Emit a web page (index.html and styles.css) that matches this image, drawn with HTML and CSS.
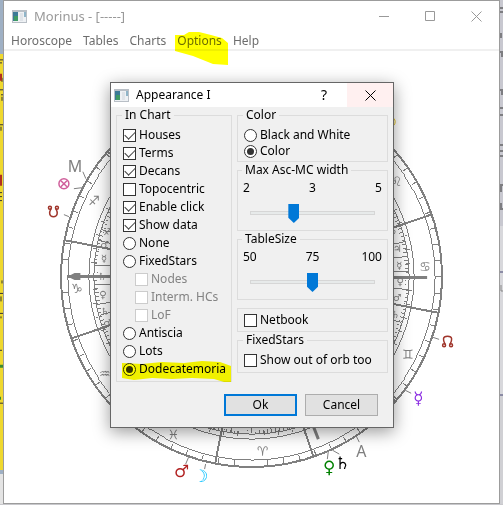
FILE: index.html
```html
<!DOCTYPE html>
<html lang="en">
<head>
    <meta charset="UTF-8">
    <meta name="viewport" content="width=device-width, initial-scale=1.0">
    <title>Morinus</title>
    <link rel="stylesheet" href="styles.css">
</head>
<body>
    <svg class="symbols" aria-hidden="true">
        <symbol id="app-icon" viewBox="0 0 15 13">
            <path fill="#b9bfc6" d="M0 0h15v13H0z"/>
            <path fill="#eef1f4" d="M1 2h13v10H1z"/>
            <path fill="#3c7a96" d="M1 2h5v9H1z"/>
            <path fill="#3f9a63" d="M2 6h4v5H2z"/>
            <path fill="#dfe3e8" d="M8 3h3v8H8z"/>
            <path fill="#8fb4c8" d="M12 2h2v5h-2z"/>
        </symbol>
        <symbol id="close-icon" viewBox="0 0 11 11">
            <path fill="none" stroke="currentColor" d="M.5.5l10 10M10.5.5l-10 10"/>
        </symbol>
    </svg>

    <!-- edges of the windows behind -->
    <svg class="behind left" viewBox="0 0 4 505" preserveAspectRatio="xMinYMin slice" aria-hidden="true">
        <path stroke="#333" d="M0 60h3M0 63h2M2 78v4M0 90h4M1 95h3M2 97v4M0 125h3M1 127v4M0 193h2M0 197h2M0 201h2M2 281v3M0 294h3M1 297v5M0 314h3M1 317v2M0 351h2M0 404h3"/>
        <path stroke="#b03020" stroke-width="2" d="M1 74v7M1 175v11"/>
        <path stroke="#3c8a30" stroke-width="3" d="M0 367h4M0 399h1"/>
    </svg>

    <main class="window">
        <header class="titlebar">
            <svg class="app-icon"><use href="#app-icon"/></svg>
            <h1 class="title">Morinus - [-----]</h1>
            <button class="caption-btn" aria-label="Minimize">
                <svg width="11" height="11"><path stroke="currentColor" d="M0 5.5h10"/></svg>
            </button>
            <button class="caption-btn" aria-label="Maximize">
                <svg width="11" height="11"><path fill="none" stroke="currentColor" d="M.5.5h9v9h-9z"/></svg>
            </button>
            <button class="caption-btn" aria-label="Close">
                <svg width="11" height="11"><use href="#close-icon"/></svg>
            </button>
        </header>

        <nav class="menu">
            <a href="#">Horoscope</a>
            <a href="#">Tables</a>
            <a href="#">Charts</a>
            <a href="#" class="marked">Options
                <svg class="marker" viewBox="0 0 53 34" preserveAspectRatio="none">
                    <path d="M0 3L9 3L14 0L24 0L36 3L47 6L53 11V33L38 32L18 24L0 19Z"/>
                </svg>
            </a>
            <a href="#">Help</a>
        </nav>

        <svg class="chart" viewBox="-248 -226 496 453">
            <g class="rings">
                <circle r="191" class="thick"/>
                <circle r="184"/>
                <circle r="163"/>
                <circle r="158"/>
                <circle r="136"/>
                <!-- degree scales -->
                <circle r="188" class="ticks-5" pathLength="360"/>
                <circle r="156" class="ticks-1" pathLength="360"/>
                <circle r="158" class="ticks-5" pathLength="360"/>
            </g>

            <!-- sign borders -->
            <g class="borders" id="borders"></g>

            <!-- decans and terms -->
            <g class="cells">
                <path d="M-157-11H-136M-156 8H-136M-154 28L-136 25M-152 39L-136 34M-153-36L-136-32M-150-47L-134-42"/>
                <path d="M154-35L136-31M156-20L136-18M157-5H136M156 13L136 11M150 46L136 42"/>
                <path d="M-38 153L-32 132M-20 156L-17 132M0 157V132M20 156L17 132M38 153L32 132"/>
            </g>

            <g class="axes">
                <path d="M-184 0H-100M100 1H176M60 145L67 163"/>
                <path class="arrow" d="M-181 0L-177-2H-173V2H-177Z"/>
            </g>

            <!-- pointers to the planets -->
            <path d="M-166-98L-169-105M-170-89L-178-88M-183-60L-188-62M-63 181L-66 188M-46 188L-47 193M77 175L76 183M81 174L88 178M105 160L108 166M154 114L160 117M182 61L188 63"/>

            <g class="signs">
                <text x="-158" y="-72">♐︎</text>
                <text x="-175" y="17">♑︎</text>
                <text x="-147" y="102">♒︎</text>
                <text x="-78" y="163">♓︎</text>
                <text x="11" y="180">♈︎</text>
                <text x="157" y="83">♊︎</text>
                <text x="174" y="-6">♋︎</text>
                <text x="145" y="-91">♌︎</text>
            </g>

            <g class="rulers">
                <text x="-144" y="-42">♐︎</text>
                <text x="-147" y="-29">♂︎</text>
                <text x="-148" y="-15">☿︎</text>
                <text x="-150" y="3">♄︎</text>
                <text x="-149" y="22">♀︎</text>
                <text x="-147" y="39">♄︎</text>
                <text x="-144" y="50">♂︎</text>
                <text x="142" y="-43">♄︎</text>
                <text x="146" y="-25">♃︎</text>
                <text x="148" y="-8">☿︎</text>
                <text x="149" y="9">♀︎</text>
                <text x="146" y="25">♂︎</text>
                <text x="144" y="42">♄︎</text>
            </g>

            <g class="planets">
                <circle class="sun" cx="139" cy="-155" r="5"/>
                <g class="fortune">
                    <circle cx="-188" cy="-93" r="5"/>
                    <path d="M-191-96l6 6M-185-96l-6 6"/>
                </g>
                <g class="south-node">
                    <circle cx="-202" cy="-69" r="1.5"/>
                    <circle cx="-195" cy="-69" r="1.5"/>
                    <path d="M-201-68C-203-64-203-60-198.500-60C-194-60-194-64-196-68"/>
                </g>
                <text class="mars" x="-70" y="201">♂︎</text>
                <text class="moon" x="-51" y="206">☽︎</text>
                <text class="venus" x="78" y="197">♀︎</text>
                <text class="saturn" x="91" y="193">♄︎</text>
                <text class="mercury" x="167" y="128">☿︎</text>
                <g class="north-node">
                    <circle cx="193" cy="69" r="1.500"/>
                    <circle cx="200" cy="69" r="1.500"/>
                    <path d="M194 68C192 64 191 60 196.500 60C202 60 201 64 199 68"/>
                </g>
                <text class="angle" x="-177" y="-105">M</text>
                <text class="angle" x="110" y="181">A</text>
            </g>
        </svg>
    </main>

    <svg class="behind right" viewBox="0 0 3 505" preserveAspectRatio="xMinYMin slice" aria-hidden="true">
        <path stroke="#333" d="M0 8h3M0 12h3M1 33v5M0 52h3M2 53v4M0 90h3M2 91v4M0 108h3M0 115h3M0 145h3M0 151h3M0 156h3M0 185h3M1 186v6M1 203v5M0 209h3"/>
        <path stroke="#404070" d="M0 272h3M0 395h3"/>
        <path stroke="#888" d="M1 285v6M1 291h2"/>
    </svg>

    <form class="dialog" role="dialog" aria-labelledby="dialog-title">
        <header class="dialog-bar">
            <svg class="app-icon"><use href="#app-icon"/></svg>
            <h2 class="dialog-title" id="dialog-title">Appearance I</h2>
            <button type="button" class="dialog-help" aria-label="Help">?</button>
            <button type="button" class="dialog-close" aria-label="Close">
                <svg width="11" height="11"><use href="#close-icon"/></svg>
            </button>
        </header>

        <div class="panels">
            <fieldset class="group in-chart">
                <legend>In Chart</legend>
                <label class="option"><input type="checkbox" checked>Houses</label>
                <label class="option"><input type="checkbox" checked>Terms</label>
                <label class="option"><input type="checkbox" checked>Decans</label>
                <label class="option"><input type="checkbox">Topocentric</label>
                <label class="option"><input type="checkbox" checked>Enable click</label>
                <label class="option"><input type="checkbox" checked>Show data</label>
                <label class="option"><input type="radio" name="outer">None</label>
                <label class="option"><input type="radio" name="outer">FixedStars</label>
                <label class="option sub"><input type="checkbox" disabled>Nodes</label>
                <label class="option sub"><input type="checkbox" disabled>Interm. HCs</label>
                <label class="option sub"><input type="checkbox" disabled>LoF</label>
                <label class="option"><input type="radio" name="outer">Antiscia</label>
                <label class="option"><input type="radio" name="outer">Lots</label>
                <label class="option marked"><input type="radio" name="outer" checked>Dodecatemoria
                    <svg class="marker" viewBox="0 0 109 21" preserveAspectRatio="none">
                        <path d="M0 2L20 3L40 1L62 2L80 0L98 1L109 5V21H102L92 18L70 17L50 18L30 17L12 19L0 17Z"/>
                    </svg>
                </label>
            </fieldset>

            <div class="column">
                <fieldset class="group tight">
                    <legend>Color</legend>
                    <label class="option"><input type="radio" name="color">Black and White</label>
                    <label class="option"><input type="radio" name="color" checked>Color</label>
                </fieldset>
                <fieldset class="group range">
                    <legend>Max Asc-MC width</legend>
                    <div class="scale"><span>2</span><span>3</span><span>5</span></div>
                    <input type="range" min="2" max="5" value="3" aria-label="Max Asc-MC width">
                </fieldset>
                <fieldset class="group range">
                    <legend>TableSize</legend>
                    <div class="scale"><span>50</span><span>75</span><span>100</span></div>
                    <input type="range" min="50" max="100" value="75" aria-label="TableSize">
                </fieldset>
                <div class="group plain">
                    <label class="option"><input type="checkbox">Netbook</label>
                </div>
                <fieldset class="group tight">
                    <legend>FixedStars</legend>
                    <label class="option"><input type="checkbox">Show out of orb too</label>
                </fieldset>
            </div>
        </div>

        <footer class="actions">
            <button type="button" class="btn primary">Ok</button>
            <button type="button" class="btn">Cancel</button>
        </footer>
    </form>

    <script>
        // twelve sign borders, 30 degrees apart
        const borders = document.getElementById('borders');
        for (let i = 0; i < 12; i++) {
            const line = document.createElementNS('http://www.w3.org/2000/svg', 'line');
            line.setAttribute('x1', 136);
            line.setAttribute('x2', 191);
            line.setAttribute('transform', `rotate(${11 + i * 30})`);
            borders.appendChild(line);
        }
    </script>
</body>
</html>
```

FILE: styles.css
```css
:root {
    --line: #808080;
    --face: #f0f0f0;
    --edge: #dcdcdc;
    --accent: #0078d7;
    --marker: #ffff00;
}

* {
    margin: 0;
    padding: 0;
    box-sizing: border-box;
}

body {
    display: flex;
    height: 100vh;
    min-height: 505px;
    padding-bottom: 1px;
    position: relative;
    overflow: hidden;
    font: 12px/16px "Noto Sans", "Open Sans", sans-serif;
    color: #000;
    background: #c8c8cc;
}

button {
    font: inherit;
    color: inherit;
    background: none;
    border: 0;
}

.symbols {
    position: absolute;
    width: 0;
    height: 0;
}

.behind {
    flex: none;
    width: 3px;
    height: 100%;
}

.behind.left {
    background: linear-gradient(#9fb0c4 54px, #efd82e 54px 470px, #9fb0c4 470px 474px, #e4e4e4 474px);
}

.behind.right {
    background: linear-gradient(#c8c8d0 226px, #d8d8dc 226px 395px, #d0d0d4 395px);
}

/* main window */
.window {
    flex: 1;
    display: flex;
    flex-direction: column;
    background: #fff;
    border: 1px solid #9c9c9c;
}

.titlebar {
    display: flex;
    align-items: center;
    height: 30px;
    padding-left: 8px;
    color: #999;
}

.app-icon {
    width: 15px;
    height: 13px;
    margin-right: 7px;
}

.title {
    flex: 1;
    font-size: 13px;
    font-weight: 400;
}

.caption-btn {
    display: grid;
    place-items: center;
    width: 46px;
    height: 30px;
}

.menu {
    display: flex;
    gap: 11px;
    height: 20px;
    padding: 2px 7px 0;
    border-bottom: 2px solid var(--face);
}

.menu a {
    color: #6d6d6d;
    text-decoration: none;
}

.marked {
    position: relative;
}

.marker {
    position: absolute;
    fill: var(--marker);
    mix-blend-mode: multiply;
    pointer-events: none;
}

.menu .marker {
    left: -2px;
    top: -1px;
    width: 53px;
    height: 34px;
}

/* chart */
.chart {
    flex: 1;
    min-height: 0;
    width: 100%;
    fill: none;
    stroke: var(--line);
    font-family: "DejaVu Sans", sans-serif;
}

.chart text {
    stroke: none;
    fill: var(--line);
    text-anchor: middle;
}

.rings,
.cells,
.borders {
    shape-rendering: crispEdges;
}

.thick,
.borders {
    stroke-width: 2;
}

.ticks-5 {
    stroke-width: 6;
    stroke-dasharray: 0.3 4.7;
}

.ticks-1 {
    stroke-width: 4;
    stroke-dasharray: 0.3 1.2;
}

.axes {
    stroke-width: 3;
}

.arrow {
    fill: var(--line);
}

.signs {
    font-size: 13px;
}

.rulers {
    font-size: 10px;
}

.planets {
    font-size: 17px;
}

.chart .mars { fill: #b22222; }
.chart .moon { fill: #00bfff; }
.chart .venus { fill: #008000; }
.chart .saturn { fill: #000; }
.chart .mercury { fill: #8a2be2; }

.chart .angle {
    font: 16px "Noto Sans", sans-serif;
}

.sun {
    stroke: #e0c020;
}

.fortune {
    stroke: #d0609c;
    stroke-width: 1.5;
}

.north-node,
.south-node {
    stroke: #a0352b;
    stroke-width: 1.5;
}

/* dialog */
.dialog {
    position: absolute;
    left: 110px;
    top: 82px;
    width: 284px;
    background: var(--face);
    border: 1px solid #666;
    box-shadow: 0 4px 16px rgba(0, 0, 0, 0.4);
}

.dialog-bar {
    display: flex;
    align-items: center;
    height: 24px;
    padding-left: 3px;
    background: #fff;
}

.dialog-title {
    flex: 1;
    font-size: 12px;
    font-weight: 400;
}

.dialog-help {
    width: 46px;
    font-size: 14px;
}

.dialog-close {
    display: grid;
    place-items: center;
    width: 46px;
    height: 24px;
    background: #fff0f0;
}

.panels {
    display: grid;
    grid-template-columns: 116px 1fr;
    gap: 5px;
    padding: 0 5px;
}

.group {
    min-width: 0;
    padding: 3px 6px;
    border: 1px solid var(--edge);
}

.group legend {
    height: 16px;
    padding: 0 3px;
    margin-left: -1px;
}

.in-chart {
    align-self: start;
    padding-bottom: 3px;
}

.option {
    display: flex;
    align-items: center;
    gap: 3px;
    height: 18px;
    white-space: nowrap;
}

.tight {
    padding: 4px 6px 2px;
}

.tight .option {
    height: 16px;
}

.tight .option:only-of-type {
    margin-bottom: 2px;
}

.plain {
    margin-top: 8px;
    padding: 2px 6px;
}

.sub {
    padding-left: 12px;
    color: #838383;
}

.option input {
    appearance: none;
    flex: none;
    display: grid;
    place-items: center;
    width: 13px;
    height: 13px;
    background: #fff;
    border: 1px solid #333;
}

.option input:disabled {
    border-color: #ccc;
}

.option input[type="radio"] {
    border-radius: 50%;
}

.option input[type="radio"]:checked::before {
    content: "";
    width: 7px;
    height: 7px;
    border-radius: 50%;
    background: #333;
}

.option input[type="checkbox"]:checked::before {
    content: "";
    width: 9px;
    height: 5px;
    border: solid #444;
    border-width: 0 0 1px 1px;
    transform: translateY(-1px) rotate(-45deg);
}

.option .marker {
    left: -1px;
    top: 1px;
    width: 109px;
    height: 21px;
}

.range {
    padding: 2px 5px 7px;
}

.scale {
    display: grid;
    grid-template-columns: 1fr 1fr 1fr;
    height: 16px;
}

.scale span:nth-child(2) {
    text-align: center;
}

.scale span:last-child {
    text-align: right;
}

.range input {
    appearance: none;
    display: block;
    width: calc(100% - 14px);
    height: 20px;
    margin: 7px 7px 0;
    background: none;
}

.range input::-webkit-slider-runnable-track {
    height: 4px;
    background: #e7eaea;
    border: 1px solid #d6d6d6;
}

.range input::-webkit-slider-thumb {
    appearance: none;
    width: 11px;
    height: 19px;
    margin-top: -8px;
    background: var(--accent);
    clip-path: polygon(0 0, 100% 0, 100% 72%, 50% 100%, 0 72%);
}

.actions {
    display: flex;
    justify-content: flex-end;
    gap: 8px;
    padding: 12px 15px 11px;
}

.btn {
    width: 73px;
    height: 22px;
    background: #e1e1e1;
    border: 1px solid #adadad;
}

.primary {
    border: 2px solid var(--accent);
}
```
